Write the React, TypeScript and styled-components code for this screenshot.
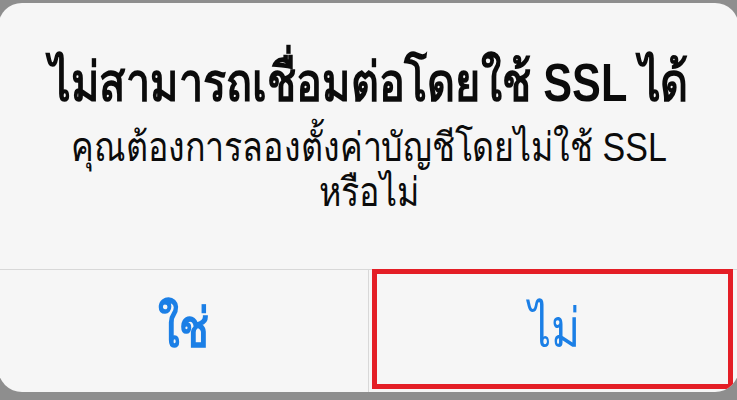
import { createGlobalStyle, styled } from "styled-components";

const Global = createGlobalStyle`
  html, body { margin: 0; height: 100%; }
  body {
    background: #8e8e8e;
    overflow: hidden;
    font-family: "Liberation Sans", "DejaVu Sans", sans-serif;
  }
`;

const Screen = styled.div`
  width: 737px;
  height: 400px;
  padding-top: 3px;
  box-sizing: border-box;
`;

const Alert = styled.div`
  margin: 0 -2px;
  height: 389px;
  background: #f6f6f6;
  border-radius: 24px;
  display: flex;
  flex-direction: column;
  overflow: hidden;
`;

const Body = styled.div`
  flex: 1;
  display: flex;
  flex-direction: column;
  align-items: center;
  padding-top: 49px;
  text-align: center;
  color: #0b0b0b;
`;

// the source font is a tall, narrow Thai face, so the text is squeezed sideways
const Title = styled.h1`
  margin: 0;
  font-size: 54px;
  font-weight: 700;
  line-height: 60px;
  white-space: nowrap;
  transform: scaleX(0.8);
`;

const Message = styled.p`
  margin: 13px 0 0;
  width: 720px;
  font-size: 40px;
  font-weight: 400;
  line-height: 45px;
  transform: scaleX(0.85);
`;

const Actions = styled.div`
  height: 122px;
  display: flex;
  border-top: 1px solid #d8d8d8;
`;

const Action = styled.button<{ $marked?: boolean }>`
  position: relative;
  flex: 1;
  display: flex;
  align-items: center;
  justify-content: center;
  border: 0;
  background: transparent;
  font-family: inherit;
  font-size: 54px;
  font-weight: ${(p) => (p.$marked ? 400 : 700)};
  color: #1b7fe6;
  padding: 0 0 6px;
  & + & {
    border-left: 1px solid #d8d8d8;
  }
  ${(p) =>
    p.$marked &&
    `
    &::after {
      content: "";
      position: absolute;
      top: -1px;
      left: 3px;
      right: 6px;
      bottom: 3px;
      border: 5px solid #e41e26;
    }
  `}
`;

const Label = styled.span`
  display: inline-block;
  transform: scaleX(0.82);
`;

export default function App() {
  return (
    <Screen>
      <Global />
      <Alert>
        <Body>
          <Title>ไม่สามารถเชื่อมต่อโดยใช้ SSL ได้</Title>
          <Message>คุณต้องการลองตั้งค่าบัญชีโดยไม่ใช้ SSL หรือไม่</Message>
        </Body>
        <Actions>
          <Action>
            <Label>ใช่</Label>
          </Action>
          <Action $marked>
            <Label>ไม่</Label>
          </Action>
        </Actions>
      </Alert>
    </Screen>
  );
}
